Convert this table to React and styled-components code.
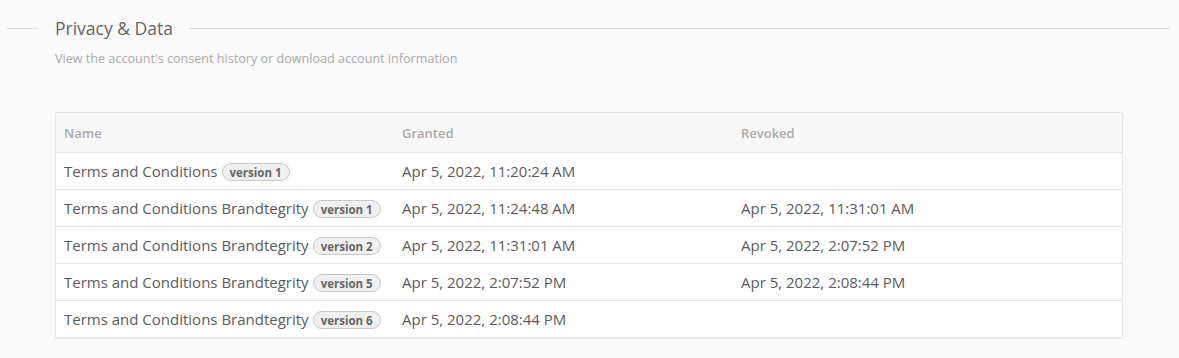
import React from 'react';
import styled, { createGlobalStyle } from 'styled-components';

const GlobalStyle = createGlobalStyle`
  body {
    margin: 0;
    background: #fafafa;
    font-family: 'Open Sans', 'Liberation Sans', sans-serif;
  }
`;

const Page = styled.div`
  padding: 17px 9px 20px 7px;
`;

const Legend = styled.div`
  display: flex;
  align-items: center;
`;

const Rule = styled.div`
  height: 1px;
  background: #e0e0e0;
  width: ${(p) => (p.$grow ? 'auto' : '31px')};
  flex: ${(p) => (p.$grow ? '1' : 'none')};
`;

const Title = styled.h2`
  margin: 0 16px 0 17px;
  font-size: 17.5px;
  font-weight: 400;
  color: #666;
  line-height: 22px;
`;

const Subtitle = styled.p`
  margin: 11px 0 0 48px;
  font-size: 12.6px;
  color: #aaa;
  line-height: 18px;
`;

const Table = styled.div`
  margin: 44px 0 0 48px;
  width: 1066px;
  background: #fff;
  border: 1px solid #e6e6e6;
  border-radius: 2px;
  box-shadow: 0 1px 2px rgba(0, 0, 0, 0.06);
`;

const Row = styled.div`
  display: grid;
  grid-template-columns: 338px 339px 1fr;
  align-items: center;
  height: ${(p) => (p.$head ? '39px' : '36px')};
  background: ${(p) => (p.$head ? '#f8f8f8' : '#fff')};
  border-top: ${(p) => (p.$first ? 'none' : '1px solid #e6e6e6')};
`;

const HeadCell = styled.div`
  padding-left: 8px;
  font-size: 13px;
  font-weight: 600;
  color: #aaa;
`;

const Cell = styled.div`
  padding-left: 8px;
  font-size: 15px;
  color: #5c5c5c;
  white-space: nowrap;
  display: flex;
  align-items: center;
`;

const Badge = styled.span`
  box-sizing: border-box;
  display: inline-block;
  margin: 2px 0 0 4px;
  padding: 0 7px;
  height: 18px;
  line-height: 17px;
  font-size: 11.5px;
  font-weight: 700;
  color: #666;
  background: #f0f0f0;
  border: 1px solid #c8c8c8;
  border-radius: 9px;
`;

const consents = [
  { name: 'Terms and Conditions', version: 1, granted: 'Apr 5, 2022, 11:20:24 AM', revoked: '' },
  { name: 'Terms and Conditions Brandtegrity', version: 1, granted: 'Apr 5, 2022, 11:24:48 AM', revoked: 'Apr 5, 2022, 11:31:01 AM' },
  { name: 'Terms and Conditions Brandtegrity', version: 2, granted: 'Apr 5, 2022, 11:31:01 AM', revoked: 'Apr 5, 2022, 2:07:52 PM' },
  { name: 'Terms and Conditions Brandtegrity', version: 5, granted: 'Apr 5, 2022, 2:07:52 PM', revoked: 'Apr 5, 2022, 2:08:44 PM' },
  { name: 'Terms and Conditions Brandtegrity', version: 6, granted: 'Apr 5, 2022, 2:08:44 PM', revoked: '' }
];

const App = () => (
  <Page>
    <GlobalStyle />
    <Legend>
      <Rule />
      <Title>Privacy &amp; Data</Title>
      <Rule $grow />
    </Legend>
    <Subtitle>View the account's consent history or download account information</Subtitle>

    <Table>
      <Row $head $first>
        <HeadCell>Name</HeadCell>
        <HeadCell>Granted</HeadCell>
        <HeadCell>Revoked</HeadCell>
      </Row>
      {consents.map((c, i) => (
        <Row key={i}>
          <Cell>
            {c.name}
            <Badge>version {c.version}</Badge>
          </Cell>
          <Cell>{c.granted}</Cell>
          <Cell>{c.revoked}</Cell>
        </Row>
      ))}
    </Table>
  </Page>
);

export default App;
